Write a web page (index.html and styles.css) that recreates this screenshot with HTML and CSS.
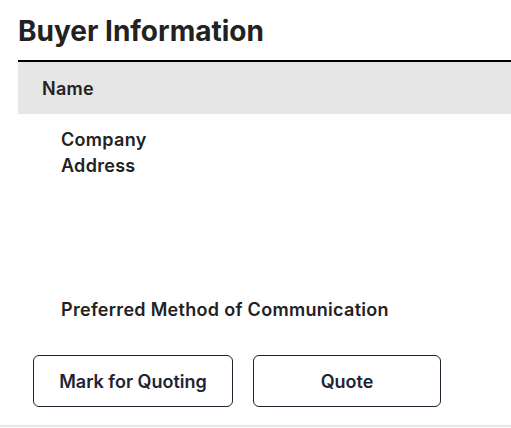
FILE: index.html
```html
<html>
  <head>
    <title>Buyer Information</title>
    <link rel="stylesheet" href="styles.css">
  </head>
  <body>
    <div class="panel">
      <h1 class="panel-title">Buyer Information</h1>
      <div class="info-table">
        <div class="info-head">Name</div>
        <div class="info-body">
          <div class="info-row">Company</div>
          <div class="info-row">Address</div>
          <div class="info-row info-pref">Preferred Method of Communication</div>
        </div>
      </div>
      <div class="actions">
        <button class="action-button mark-button">Mark for Quoting</button>
        <button class="action-button quote-button">Quote</button>
      </div>
    </div>
    <div class="divider"></div>
  </body>
</html>
```

FILE: styles.css
```css
/* Page basics */
body {
  margin: 0;
  font-family: "Inter", "Noto Sans", sans-serif;
  color: #222;
  background-color: #fff;
  overflow: hidden;
}
.panel {
  padding-left: 18px;
}
.panel-title {
  margin: 0;
  padding-top: 14px;
  height: 60px;
  box-sizing: border-box;
  font-size: 28px;
  font-weight: 700;
  line-height: 34px;
  color: #222;
}
/* Table with the buyer fields */
.info-table {
  border-top: 2px solid #000;
}
.info-head {
  height: 52px;
  display: flex;
  align-items: center;
  padding-left: 24px;
  background-color: #e6e6e6;
  font-size: 18px;
  font-weight: 600;
  letter-spacing: 0.3px;
}
.info-body {
  padding: 13px 0 0 43px;
}
.info-row {
  font-size: 18px;
  font-weight: 600;
  line-height: 26px;
  letter-spacing: 0.3px;
}
.info-pref {
  margin-top: 118px;
}
/* Buttons */
.actions {
  display: flex;
  gap: 20px;
  margin: 32px 0 0 15px;
}
.action-button {
  height: 52px;
  border: 1px solid #1f2430;
  border-radius: 6px;
  background-color: #fff;
  color: #1e2433;
  font-family: inherit;
  font-size: 18px;
  font-weight: 600;
  cursor: pointer;
}
.mark-button {
  width: 200px;
}
.quote-button {
  width: 188px;
}
.divider {
  margin-top: 18px;
  height: 2px;
  background-color: #e6e7ec;
}
```
